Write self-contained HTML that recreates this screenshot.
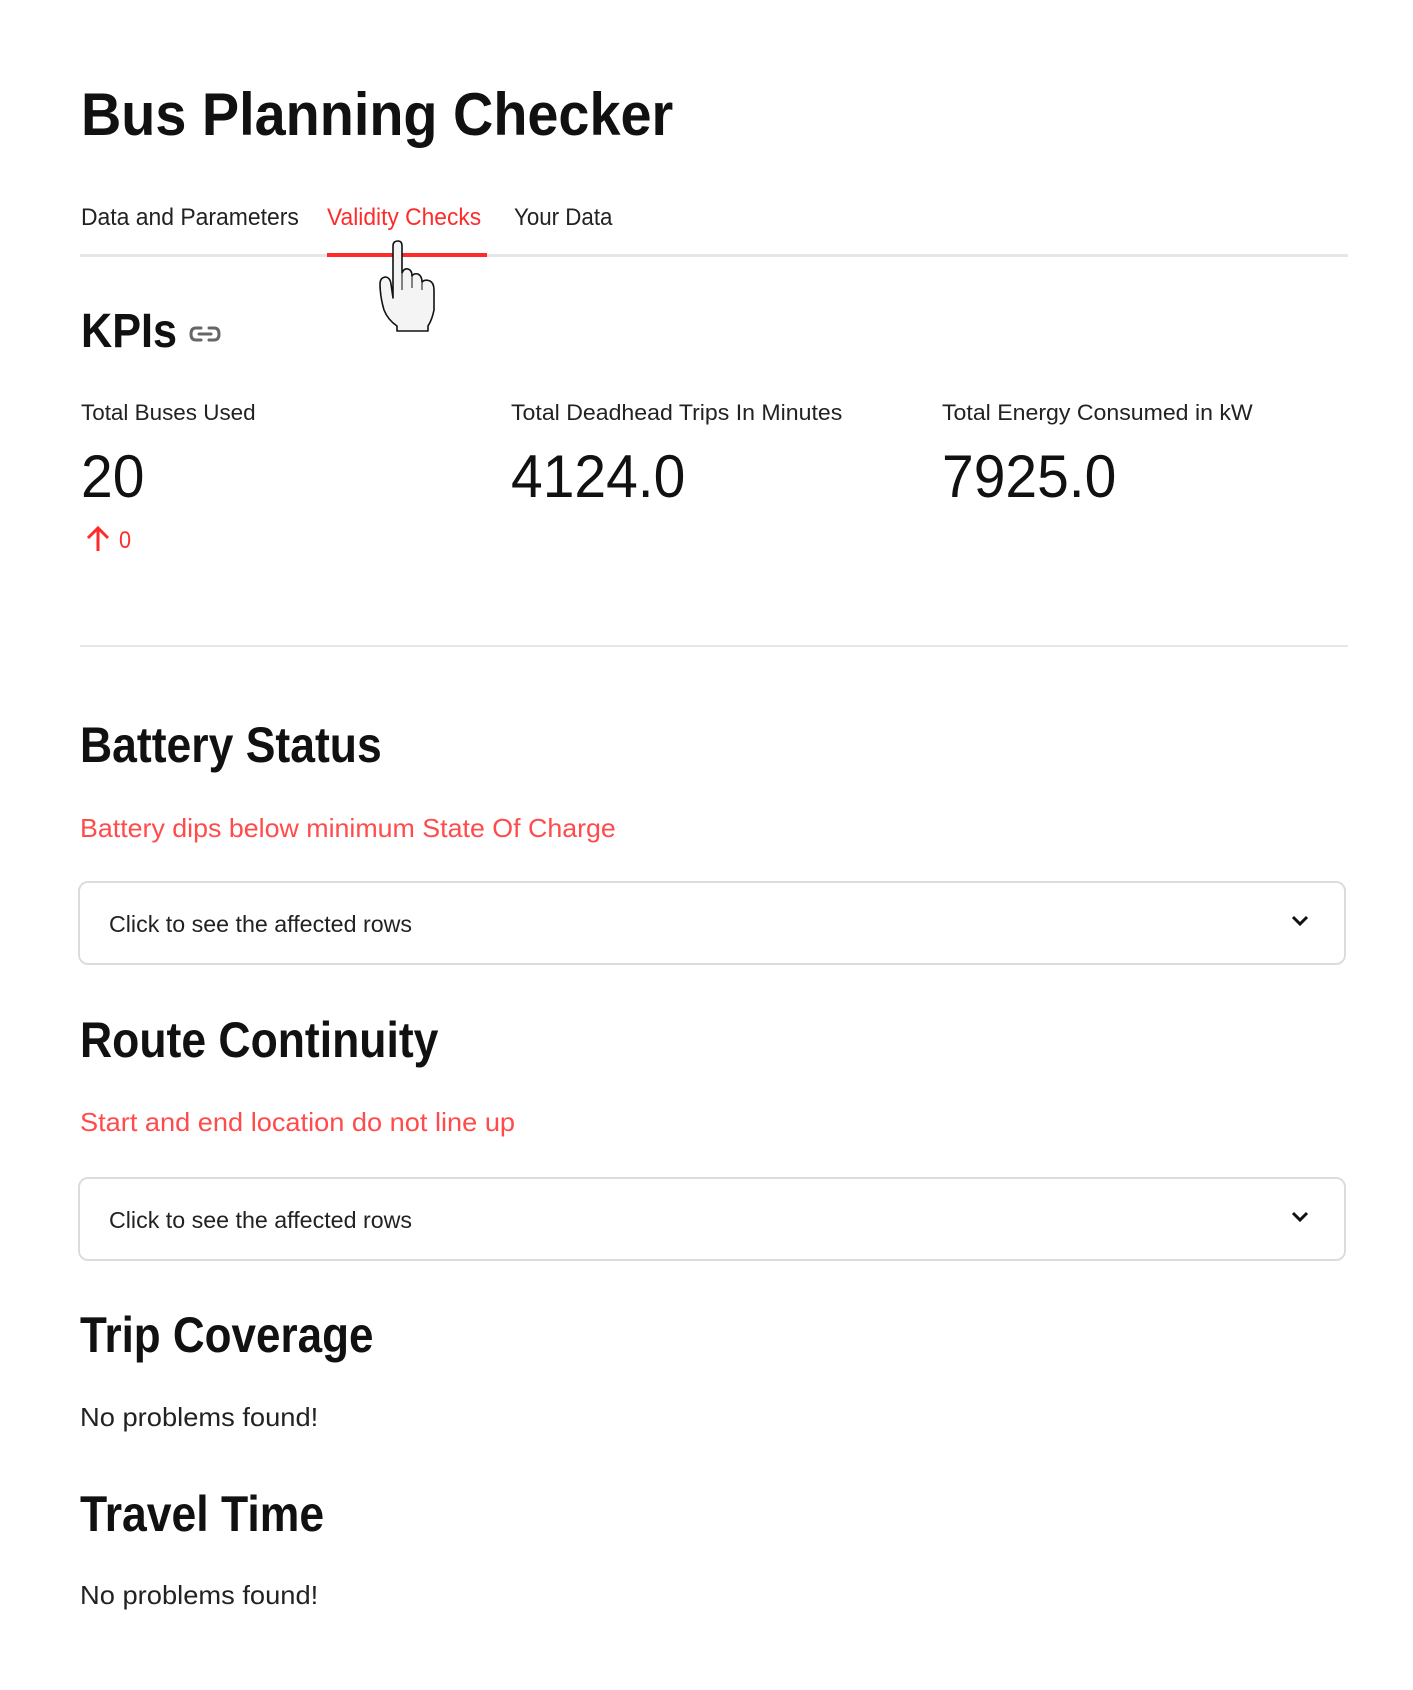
<!DOCTYPE html>
<html><head><meta charset="utf-8"><style>
html,body{margin:0;padding:0;background:#fff;width:1413px;height:1690px;overflow:hidden}
body{position:relative;font-family:"Liberation Sans",sans-serif;color:#111}
.t{position:absolute;white-space:nowrap;line-height:1;transform-origin:0 0}
.b{font-weight:bold}
.red{color:#ff4b4b}
.line{position:absolute;background:#e6e6e6}
.exp{position:absolute;left:78px;width:1268px;height:84px;border:2px solid #dcdcdc;border-radius:10px;box-sizing:border-box}
</style></head><body>
<div class="t b" style="left:81px;top:85px;font-size:60px;transform:scaleX(0.93)">Bus Planning Checker</div>

<div class="t" style="left:81px;top:206px;font-size:24px;color:#222;transform:scaleX(0.955)">Data and Parameters</div>
<div class="t" style="left:327px;top:206px;font-size:24px;color:#ff2b2b;transform:scaleX(0.95)">Validity Checks</div>
<div class="t" style="left:514px;top:206px;font-size:24px;color:#222;transform:scaleX(0.93)">Your Data</div>
<div class="line" style="left:80px;top:254px;width:1268px;height:3px"></div>
<div style="position:absolute;left:327px;top:253px;width:160px;height:4px;background:#ff2b2b"></div>

<svg style="position:absolute;left:378px;top:240px" width="64" height="92" viewBox="0 0 64 92">
<path d="M15 6 Q15 1 20 1 Q24 1 24 6 L24 33 Q26 28 30 29 Q34 30 34 36 Q36 33 40 34 Q44 36 44 42 Q47 39 52 41 Q56 43 56 50 L56 70 Q54 80 50 86 L50 91 L19 91 L19 86 Q10 80 6 70 Q2 56 2 44 Q2 38 7 37 Q12 37 13 44 L15 58 Z" fill="#f4f4f4" stroke="#111" stroke-width="1.6" stroke-linejoin="round"/>
<path d="M24 33 L24 50 M34 36 L34 48 M44 42 L44 50" stroke="#111" stroke-width="1" fill="none"/>
</svg>

<div class="t b" style="left:81px;top:308px;font-size:48px;transform:scaleX(0.9)">KPIs</div>
<svg style="position:absolute;left:188px;top:324px" width="34" height="20" viewBox="0 0 34 20">
<path d="M13 4 H8 Q3 4 3 10 Q3 16 8 16 H13 M21 4 H26 Q31 4 31 10 Q31 16 26 16 H21 M11 10 H23" fill="none" stroke="#666" stroke-width="3" stroke-linecap="round"/>
</svg>

<div class="t" style="left:81px;top:402px;font-size:22px;color:#222;transform:scaleX(1.02)">Total Buses Used</div>
<div class="t" style="left:511px;top:402px;font-size:22px;color:#222;transform:scaleX(1.05)">Total Deadhead Trips In Minutes</div>
<div class="t" style="left:942px;top:402px;font-size:22px;color:#222;transform:scaleX(1.05)">Total Energy Consumed in kW</div>
<div class="t" style="left:81px;top:447px;font-size:60px;transform:scaleX(0.95)">20</div>
<div class="t" style="left:511px;top:447px;font-size:60px;transform:scaleX(0.95)">4124.0</div>
<div class="t" style="left:942px;top:447px;font-size:60px;transform:scaleX(0.95)">7925.0</div>

<svg style="position:absolute;left:85px;top:525px" width="26" height="27" viewBox="0 0 26 27">
<path d="M13 26 V3 M3 13 L13 3 L23 13" fill="none" stroke="#ff2b2b" stroke-width="3"/>
</svg>
<div class="t" style="left:119px;top:529px;font-size:24px;color:#ff2b2b;transform:scaleX(0.9)">0</div>

<div class="line" style="left:80px;top:645px;width:1268px;height:2px"></div>

<div class="t b" style="left:80px;top:720px;font-size:50px;transform:scaleX(0.89)">Battery Status</div>
<div class="t red" style="left:80px;top:815px;font-size:26px;transform:scaleX(1.03)">Battery dips below minimum State Of Charge</div>
<div class="exp" style="top:881px"></div>
<div class="t" style="left:109px;top:913px;font-size:23px;color:#222;transform:scaleX(1.01)">Click to see the affected rows</div>
<svg style="position:absolute;left:1291px;top:915px" width="18" height="12" viewBox="0 0 18 12"><path d="M2 2 L9 9 L16 2" fill="none" stroke="#111" stroke-width="3"/></svg>

<div class="t b" style="left:80px;top:1015px;font-size:50px;transform:scaleX(0.89)">Route Continuity</div>
<div class="t red" style="left:80px;top:1109px;font-size:26px;transform:scaleX(1.045)">Start and end location do not line up</div>
<div class="exp" style="top:1177px"></div>
<div class="t" style="left:109px;top:1209px;font-size:23px;color:#222;transform:scaleX(1.01)">Click to see the affected rows</div>
<svg style="position:absolute;left:1291px;top:1211px" width="18" height="12" viewBox="0 0 18 12"><path d="M2 2 L9 9 L16 2" fill="none" stroke="#111" stroke-width="3"/></svg>

<div class="t b" style="left:80px;top:1310px;font-size:50px;transform:scaleX(0.88)">Trip Coverage</div>
<div class="t" style="left:80px;top:1404px;font-size:26px;color:#222;transform:scaleX(1.05)">No problems found!</div>
<div class="t b" style="left:80px;top:1489px;font-size:50px;transform:scaleX(0.89)">Travel Time</div>
<div class="t" style="left:80px;top:1582px;font-size:26px;color:#222;transform:scaleX(1.05)">No problems found!</div>
</body></html>
